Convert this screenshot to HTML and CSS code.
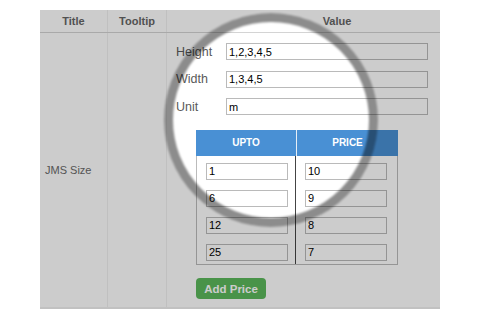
FILE: index.html
```html
<!DOCTYPE html>
<html lang="en">
<head>
    <meta charset="UTF-8">
    <meta name="viewport" content="width=device-width, initial-scale=1.0">
    <title>JMS Size - Price Table</title>
    <link rel="stylesheet" href="styles.css">
</head>
<body>
    <div class="sheet">
        <div class="row head">
            <div class="cell">Title</div>
            <div class="cell">Tooltip</div>
            <div class="cell value-head">Value</div>
        </div>
        <div class="row body">
            <div class="cell title-cell">JMS Size</div>
            <div class="cell"></div>
            <div class="cell value-cell">
                <div class="fields">
                    <label>Height</label>
                    <input type="text" value="1,2,3,4,5">
                    <label>Width</label>
                    <input type="text" value="1,3,4,5">
                    <label>Unit</label>
                    <input type="text" value="m">
                </div>

                <div class="price-table">
                    <div class="price-head">
                        <div>UPTO</div>
                        <div>PRICE</div>
                    </div>
                    <div class="price-row">
                        <div><input type="text" value="1"></div>
                        <div><input type="text" value="10"></div>
                    </div>
                    <div class="price-row">
                        <div><input type="text" value="6"></div>
                        <div><input type="text" value="9"></div>
                    </div>
                    <div class="price-row">
                        <div><input type="text" value="12"></div>
                        <div><input type="text" value="8"></div>
                    </div>
                    <div class="price-row">
                        <div><input type="text" value="25"></div>
                        <div><input type="text" value="7"></div>
                    </div>
                </div>

                <button type="button" class="btn-add">Add Price</button>
            </div>
        </div>

        <!-- magnifier overlay -->
        <div class="lens"></div>
    </div>
</body>
</html>
```

FILE: styles.css
```css
body {
    margin: 0;
    background: #fff;
    font-family: "Liberation Sans", Arial, sans-serif;
}
.sheet {
    position: relative;
    overflow: hidden;
    width: 400px;
    margin: 10px 0 0 40px;
    background: #fff;
}
.row {
    display: grid;
    grid-template-columns: 68px 59px 1fr;
}
.row .cell:nth-child(1),
.row .cell:nth-child(2) {
    border-right: 1px solid #f0f0f0;
}
.head {
    height: 22px;
    border-bottom: 1px solid #d4d4d4;
}
.head .cell {
    font-size: 11px;
    font-weight: bold;
    color: #666;
    text-align: center;
    line-height: 22px;
}
.head .value-head {
    padding-left: 67px;
}
.body {
    border-bottom: 2px solid #f2f2f2;
}
.title-cell {
    display: flex;
    align-items: center;
    padding-left: 5px;
    font-size: 11px;
    color: #6a6a6a;
}
.value-cell {
    padding: 10px 0 8px 9px;
}
.fields {
    display: grid;
    grid-template-columns: 50px 202px;
    row-gap: 10.5px;
    align-items: center;
}
.fields label {
    font-size: 12.5px;
    color: #5a5a5a;
}
input {
    box-sizing: border-box;
    height: 17px;
    margin: 0;
    padding: 0 2px;
    border: 1px solid #bababa;
    background: #fff;
    font-family: "Liberation Sans", Arial, sans-serif;
    font-size: 11px;
    color: #000;
}
.fields input {
    width: 202px;
}
.price-table {
    width: 202px;
    margin: 15px 0 0 20px;
    border-bottom: 1px solid #bbb;
}
.price-head {
    display: grid;
    grid-template-columns: 101px 101px;
    height: 26px;
    background: #4990d4;
}
.price-head div {
    font-size: 10px;
    font-weight: bold;
    color: #fff;
    text-align: center;
    line-height: 26px;
}
.price-head div:first-child {
    border-right: 1px solid #e6eef6;
}
.price-row {
    display: grid;
    grid-template-columns: 99px 100px;
    border-left: 1px solid #bbb;
    border-right: 1px solid #bbb;
}
.price-row div {
    height: 27px;
    box-sizing: border-box;
    padding: 5px 0 0 9px;
}
.price-row div:first-child {
    border-right: 1px solid #444;
}
.price-row input {
    width: 82px;
}
.btn-add {
    display: block;
    width: 70px;
    height: 21px;
    margin: 13px 0 0 20px;
    padding: 0;
    border: none;
    border-radius: 4px;
    background: #5cb85c;
    color: #fff;
    font-family: "Liberation Sans", Arial, sans-serif;
    font-size: 11.5px;
    font-weight: bold;
}
.lens {
    position: absolute;
    left: 124px;
    top: 3px;
    width: 214px;
    height: 214px;
    box-sizing: border-box;
    border: 9px solid rgba(0, 0, 0, 0.45);
    border-radius: 50%;
    box-shadow: 0 0 0 500px rgba(0, 0, 0, 0.2);
    filter: blur(1px);
    pointer-events: none;
}
```
